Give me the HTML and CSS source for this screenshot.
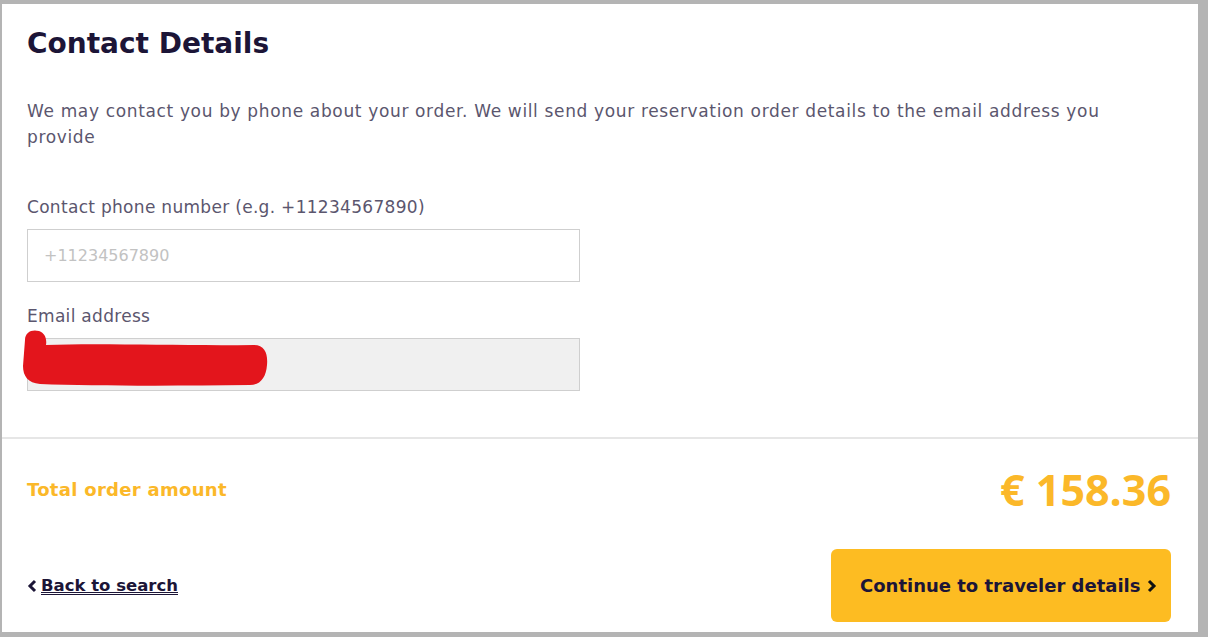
FILE: index.html
```html
<!DOCTYPE html>
<html lang="en">
<head>
    <meta charset="UTF-8">
    <title>Contact Details</title>
    <link rel="stylesheet" href="styles.css">
</head>
<body>
    <div class="page">
        <div class="card">
            <div class="details">
                <h2 class="title">Contact Details</h2>
                <p class="intro">We may contact you by phone about your order. We will send your reservation order details to the email address you provide</p>

                <label class="field-label" for="phone">Contact phone number (e.g. +11234567890)</label>
                <input class="field" type="text" id="phone" placeholder="+11234567890">

                <label class="field-label second" for="email">Email address</label>
                <div class="field-wrap">
                    <input class="field readonly" type="text" id="email" readonly>
                    <!-- redacted -->
                    <svg class="scribble" width="250" height="58" viewBox="0 0 250 58">
                        <path d="M3 10 C3 2 10 -1 17 1 C23 3 25 9 24 15 C80 13 160 16 232 15 C243 15 246 24 245 35 C244 48 238 55 228 55 C150 56 70 56 18 54 C6 53 1 46 1 36 Z" fill="#e3151c"/>
                    </svg>
                </div>
            </div>

            <div class="summary">
                <div class="total-row">
                    <span class="total-label">Total order amount</span>
                    <span class="total-price">€ 158.36</span>
                </div>
                <div class="actions">
                    <a class="back-link" href="#">
                        <svg width="10" height="14" viewBox="0 0 10 14"><polyline points="8,2 3,7 8,12" fill="none" stroke="#1c1537" stroke-width="3"/></svg>
                        <span>Back to search</span>
                    </a>
                    <button class="continue-btn">
                        <span>Continue to traveler details</span>
                        <svg width="10" height="14" viewBox="0 0 10 14"><polyline points="2,2 7,7 2,12" fill="none" stroke="#111" stroke-width="3"/></svg>
                    </button>
                </div>
            </div>
        </div>
    </div>
</body>
</html>
```

FILE: styles.css
```css
body {
    margin: 0;
    background-color: #b4b4b4;
    font-family: "DejaVu Sans", Arial, sans-serif;
    color: #5b566e;
}

.page {
    padding: 4px 10px 5px 2px;
}

.card {
    background-color: #fff;
    height: 628px;
}

.details {
    padding: 22px 27px 46px 25px;
    border-bottom: 2px solid #e6e6e6;
}

.title {
    margin: 0;
    font-size: 28px;
    line-height: 36px;
    font-weight: 700;
    color: #1c1537;
}

.intro {
    max-width: 1110px;
    margin: 36px 0 0 0;
    font-size: 17px;
    line-height: 26px;
    letter-spacing: 0.65px;
}

.field-label {
    display: block;
    margin-top: 45px;
    font-size: 17px;
    line-height: 24px;
    letter-spacing: 0.3px;
}

.field-label.second {
    margin-top: 22px;
}

.field {
    display: block;
    box-sizing: border-box;
    width: 553px;
    height: 53px;
    margin-top: 10px;
    padding: 0 16px;
    border: 1px solid #cfcfcf;
    border-radius: 0;
    font-family: "DejaVu Sans", Arial, sans-serif;
    font-size: 16px;
    color: #5b566e;
    outline: none;
}

.field::placeholder {
    color: #c2c2c2;
}

.field.readonly {
    background-color: #f0f0f0;
}

.field-wrap {
    position: relative;
}

.scribble {
    position: absolute;
    left: -5px;
    top: -8px;
}

.summary {
    padding: 20px 27px 0 25px;
}

.total-row {
    display: flex;
    justify-content: space-between;
    align-items: center;
    height: 60px;
}

.total-label {
    font-size: 18px;
    font-weight: 700;
    letter-spacing: 0.3px;
    color: #fbb829;
}

.total-price {
    font-family: "Open Sans", Arial, sans-serif;
    font-size: 43px;
    font-weight: 700;
    color: #fbb829;
}

.actions {
    display: flex;
    justify-content: space-between;
    align-items: center;
    margin-top: 30px;
}

.back-link {
    display: flex;
    align-items: center;
    gap: 4px;
    color: #1c1537;
    font-size: 16.5px;
    font-weight: 700;
}

.back-link span {
    text-decoration: underline;
    text-underline-offset: 3px;
}

.continue-btn {
    display: flex;
    align-items: center;
    justify-content: flex-start;
    gap: 6px;
    height: 73px;
    width: 340px;
    padding: 0 0 0 29px;
    background-color: #fdbc22;
    border: none;
    border-radius: 6px;
    color: #1c1537;
    font-family: "DejaVu Sans", Arial, sans-serif;
    font-size: 18px;
    font-weight: 700;
    white-space: nowrap;
    cursor: pointer;
}
```
